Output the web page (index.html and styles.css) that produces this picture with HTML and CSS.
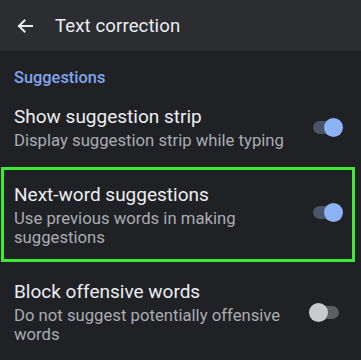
FILE: index.html
```html
<!DOCTYPE html>
<html>
<head>
<meta charset="utf-8">
<link rel="stylesheet" href="styles.css">
</head>
<body>
<div class="screen">
  <header class="appbar">
    <svg class="back" width="16" height="14" viewBox="0 0 16 14">
      <path d="M15 7H2M7.5 1.5L2 7l5.5 5.5" fill="none" stroke="#e8eaed" stroke-width="2" stroke-linecap="square"/>
    </svg>
    <span class="title">Text correction</span>
  </header>
  <div class="section-head">Suggestions</div>
  <div class="row">
    <div class="text">
      <div class="row-title">Show suggestion strip</div>
      <div class="row-sub">Display suggestion strip while typing</div>
    </div>
    <div class="toggle on"><span class="track"></span><span class="thumb"></span></div>
  </div>
  <div class="row highlighted">
    <div class="text">
      <div class="row-title">Next-word suggestions</div>
      <div class="row-sub">Use previous words in making suggestions</div>
    </div>
    <div class="toggle on"><span class="track"></span><span class="thumb"></span></div>
    <div class="highlight"></div>
  </div>
  <div class="row">
    <div class="text">
      <div class="row-title">Block offensive words</div>
      <div class="row-sub">Do not suggest potentially offensive words</div>
    </div>
    <div class="toggle off"><span class="track"></span><span class="thumb"></span></div>
  </div>
</div>
</body>
</html>
```
FILE: styles.css
```css
html, body {
  margin: 0;
  padding: 0;
  background: #202125;
}
.screen {
  width: 361px;
  height: 360px;
  overflow: hidden;
  background: #202125;
  font-family: Roboto, "Noto Sans", sans-serif;
  color: #e8eaed;
}
.appbar {
  height: 51px;
  background: #2c2d31;
  display: flex;
  align-items: center;
  padding-left: 17px;
  box-sizing: border-box;
}
.back {
  display: block;
  margin-top: 1px;
}
.title {
  margin-left: 22px;
  font-size: 18.6px;
  color: #ebecef;
  letter-spacing: 0.1px;
}
.section-head {
  padding: 17px 14px 0;
  font-size: 16.4px;
  line-height: 20px;
  font-weight: 500;
  color: #7fa6ea;
}
.row {
  position: relative;
  display: flex;
  align-items: center;
  padding: 17px 18px 16px 14px;
}
.text {
  flex: 1;
  min-width: 0;
  padding-right: 8px;
}
.row-title {
  font-size: 19px;
  line-height: 24px;
  color: #eceef1;
}
.row-sub {
  margin-top: 2px;
  font-size: 16.7px;
  line-height: 19px;
  color: #a9acb1;
}
.toggle {
  position: relative;
  width: 34px;
  height: 20px;
  flex: none;
}
.track {
  position: absolute;
  left: 4px;
  top: 3.5px;
  width: 26px;
  height: 13px;
  border-radius: 7px;
}
.thumb {
  position: absolute;
  top: 0.5px;
  width: 19px;
  height: 19px;
  border-radius: 50%;
}
.on .track { background: #4a5569; }
.on .thumb { right: 0; background: #8cb3f5; }
.off .track { background: #5c5e63; }
.off .thumb { left: 0; background: #c9cacc; }
.highlighted .toggle { margin-top: -6px; }
.highlight {
  position: absolute;
  left: 1px;
  top: 1px;
  width: 354px;
  height: 95px;
  box-sizing: border-box;
  border: 3.5px solid #3deb36;
  pointer-events: none;
}
```
